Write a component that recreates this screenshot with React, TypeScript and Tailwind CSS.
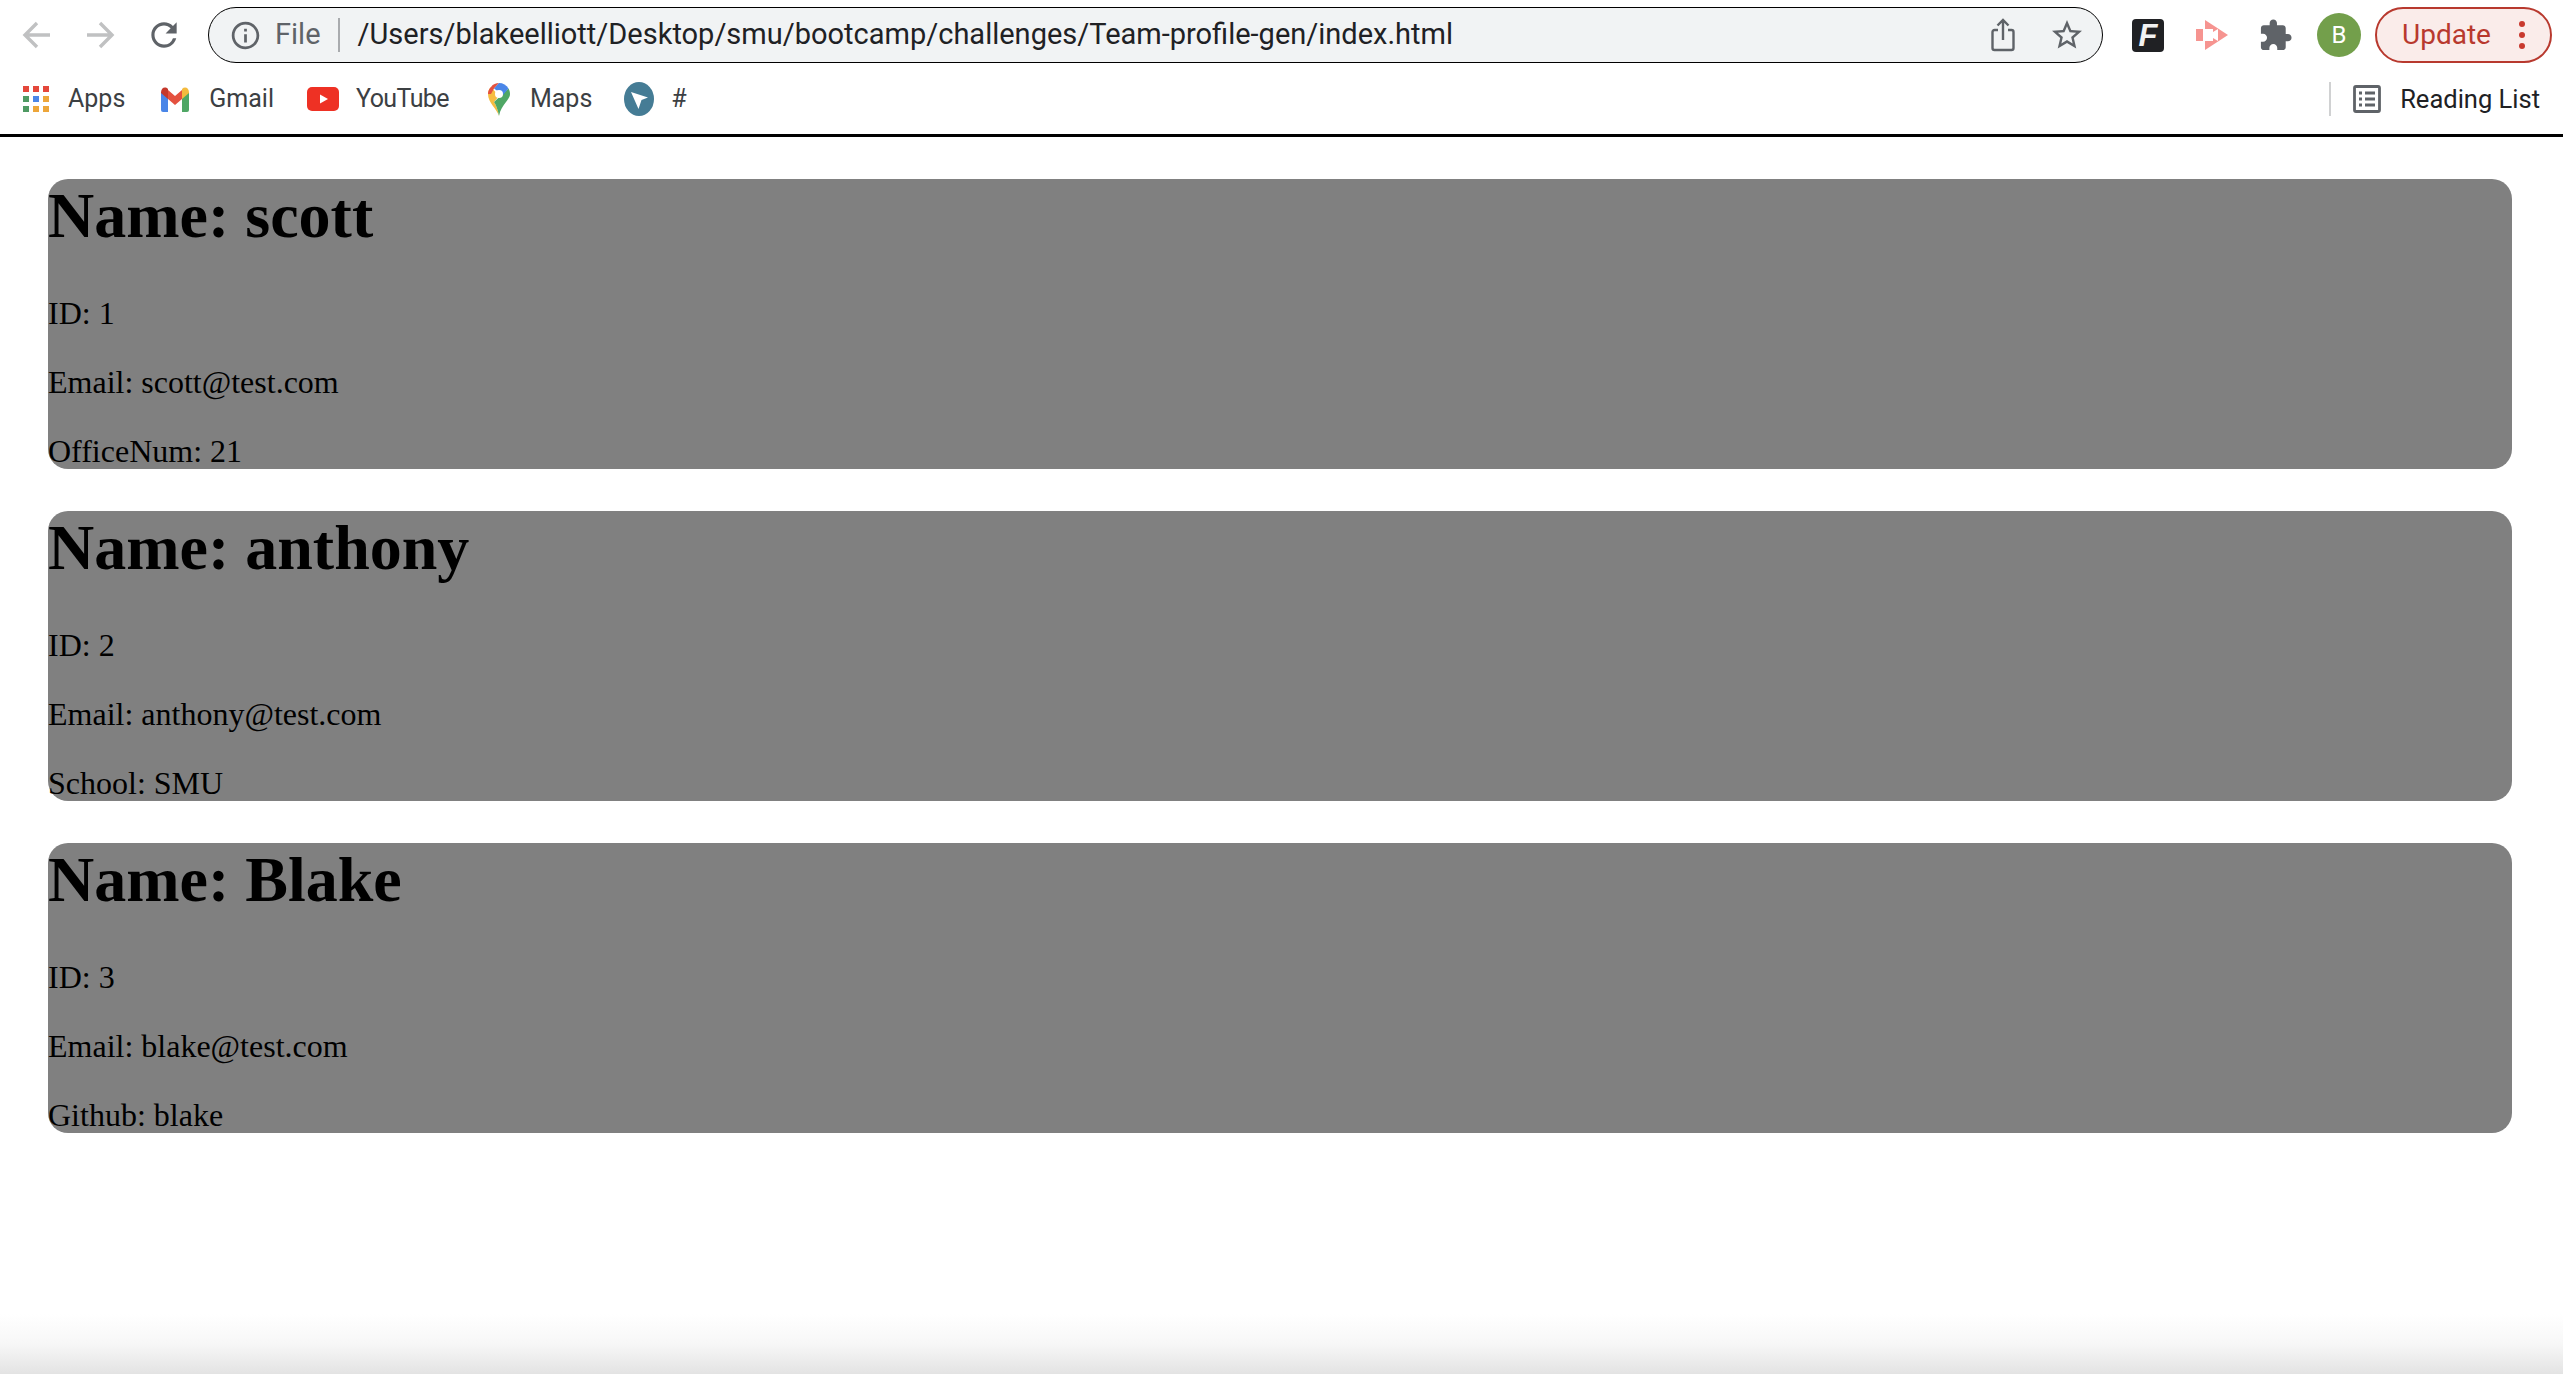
import React from 'react'

interface Member {
  name: string
  id: number
  email: string
  extra: string
}

const members: Member[] = [
  { name: 'scott', id: 1, email: 'scott@test.com', extra: 'OfficeNum: 21' },
  { name: 'anthony', id: 2, email: 'anthony@test.com', extra: 'School: SMU' },
  { name: 'Blake', id: 3, email: 'blake@test.com', extra: 'Github: blake' },
]

const appColors = ['#e4473b', '#e4473b', '#e4473b', '#4f9a63', '#4a86e8', '#eda63a', '#4f9a63', '#eda63a', '#eda63a']

const ArrowIcon = ({ flip = false }: { flip?: boolean }) => (
  <svg viewBox="0 0 30 30" className="w-[30px] h-[30px]" style={flip ? { transform: 'scaleX(-1)' } : undefined}>
    <path d="M28 15H3M15 3L3 15l12 12" fill="none" stroke="#c0c1c2" strokeWidth="3.4" />
  </svg>
)

const MaterialIcon = ({ d, className }: { d: string; className: string }) => (
  <svg viewBox="0 0 24 24" className={className} fill="currentColor">
    <path d={d} />
  </svg>
)

const AppsIcon = () => (
  <div className="grid grid-cols-3 gap-[4px] w-[26px]">
    {appColors.map((color, i) => (
      <span key={i} className="w-[6px] h-[6px]" style={{ backgroundColor: color }} />
    ))}
  </div>
)

const GmailIcon = () => (
  <svg viewBox="0 0 30 26" className="w-[30px] h-[26px]">
    <path d="M1 6v18a2 2 0 0 0 2 2h5V11z" fill="#4a86e8" />
    <path d="M29 6v18a2 2 0 0 1-2 2h-5V11z" fill="#4fa765" />
    <path d="M8 4v9l7 6 7-6V4l-7 6z" fill="#e4513f" />
    <path d="M1 6.500C1 2 5 0 8 3v10L1 7z" fill="#c5392c" />
    <path d="M29 6.500C29 2 25 0 22 3v10l7-6z" fill="#f4bb3e" />
  </svg>
)

const YouTubeIcon = () => (
  <svg viewBox="0 0 32 24" className="w-[32px] h-[24px]">
    <rect width="32" height="24" rx="5" fill="#ee3124" />
    <path d="M13 7.500l8 4.500-8 4.500z" fill="#fff" />
  </svg>
)

const MapsIcon = () => (
  <svg viewBox="0 0 24 34" className="w-[24px] h-[34px]">
    <path d="M12 34C10 27 1 21 1 12c0-3 1-5 3-7l8 9-5 6c2 3 4 8 5 14z" fill="#f6bd41" />
    <path d="M12 34c1-6 4-10 7-14 2-3 4-5 4-8 0-2-.6-4-1.500-5.500L7 20c2 3 4 8 5 14z" fill="#4fa765" />
    <path d="M4 5C6 2 9 1 12 1l-5 5.500L4 12l-3 0c0-3 1-5 3-7z" fill="#e4513f" />
    <path d="M12 1c4 0 7.500 2 9.500 5.500L16 13l-9-6.500z" fill="#4a86e8" />
    <circle cx="12" cy="12" r="4" fill="#fff" />
  </svg>
)

const CursorBadge = () => (
  <svg viewBox="0 0 30 34" className="w-[30px] h-[34px]">
    <ellipse cx="15" cy="17" rx="15" ry="17" fill="#457c95" />
    <path d="M7 10l17 5.500-6.500 2.500-3 9z" fill="#fff" />
  </svg>
)

const BookmarkItem = ({
  icon,
  label,
  className,
  labelClass = '',
}: {
  icon: React.ReactNode
  label: string
  className: string
  labelClass?: string
}) => (
  <div className={`flex items-center ${className}`}>
    {icon}
    <span className={`text-[25px] text-[#3c4043] ${labelClass}`}>{label}</span>
  </div>
)

const BrowserChrome = () => (
  <header className="shrink-0 h-[137px] border-b-[3px] border-black font-['Roboto',sans-serif]">
    {/* toolbar */}
    <div className="flex items-center h-[70px]">
      <div className="flex items-center justify-center w-[72px] pl-[1px]">
        <ArrowIcon />
      </div>
      <div className="flex items-center justify-center w-[56px]">
        <ArrowIcon flip />
      </div>
      <div className="flex items-center justify-center w-[72px] text-[#5f6368]">
        <MaterialIcon
          className="w-[38px] h-[38px]"
          d="M17.65 6.350A7.958 7.958 0 0 0 12 4c-4.420 0-7.990 3.580-7.990 8s3.570 8 7.990 8c3.730 0 6.840-2.550 7.730-6h-2.080A5.990 5.990 0 0 1 12 18c-3.310 0-6-2.690-6-6s2.690-6 6-6c1.660 0 3.140.690 4.220 1.780L13 11h7V4l-2.350 2.350z"
        />
      </div>
      <div className="flex items-center w-[1895px] h-[56px] ml-[8px] rounded-full border-[1.500px] border-black bg-[#f1f3f4]">
        <div className="flex items-center justify-center w-[66px] pl-[6px] text-[#5f6368]">
          <MaterialIcon
            className="w-[33px] h-[33px]"
            d="M11 7h2v2h-2zm0 4h2v6h-2zm1-9C6.480 2 2 6.480 2 12s4.480 10 10 10 10-4.480 10-10S17.520 2 12 2zm0 18c-4.410 0-8-3.590-8-8s3.590-8 8-8 8 3.590 8 8-3.590 8-8 8z"
          />
        </div>
        <span className="text-[29px] text-[#5f6368]">File</span>
        <span className="w-[2px] h-[34px] ml-[17px] bg-[#a9abae]" />
        <span className="ml-[18px] text-[29px] text-[#202124] whitespace-nowrap">
          /Users/blakeelliott/Desktop/smu/bootcamp/challenges/Team-profile-gen/index.html
        </span>
        <div className="flex items-center ml-auto text-[#5f6368]">
          <svg viewBox="0 0 24 34" className="w-[24px] h-[34px]" fill="none" stroke="currentColor" strokeWidth="2.400">
            <path d="M7 12H3.500a2 2 0 0 0-2 2v16a2 2 0 0 0 2 2h17a2 2 0 0 0 2-2V14a2 2 0 0 0-2-2H17M12 22V2M6.500 7.500L12 2l5.500 5.500" />
          </svg>
          <MaterialIcon
            className="w-[36px] h-[36px] ml-[34px] mr-[17px]"
            d="M22 9.240l-7.190-.620L12 2 9.190 8.630 2 9.240l5.460 4.730L5.820 21 12 17.270 18.180 21l-1.630-7.030L22 9.240zM12 15.400l-3.760 2.270 1-4.280-3.320-2.880 4.380-.380L12 6.100l1.710 4.040 4.380.380-3.320 2.880 1 4.280L12 15.400z"
          />
        </div>
      </div>
      {/* extensions */}
      <div className="flex items-center justify-center w-[32px] h-[33px] ml-[29px] rounded-[4px] bg-[#202124] overflow-hidden">
        <span className="text-[31px] leading-none font-bold italic text-[#f2f2f2] font-['Liberation_Sans',sans-serif]">F</span>
      </div>
      <svg viewBox="0 0 32 32" className="w-[32px] h-[32px] ml-[32px]" fill="#f69490">
        <path d="M0 10h7v12H0z" />
        <path d="M9 1l23 15-23 15z" />
        <path d="M9 10h8v3l5-3v12l-5-3v3H9z" fill="#fff" />
      </svg>
      <MaterialIcon
        className="w-[35px] h-[35px] ml-[30px] text-[#5f6368]"
        d="M20.500 11H19V7c0-1.100-.9-2-2-2h-4V3.500C13 2.120 11.880 1 10.500 1S8 2.120 8 3.500V5H4c-1.100 0-1.990.9-1.990 2v3.800H3.500c1.490 0 2.700 1.210 2.700 2.700s-1.210 2.700-2.700 2.700H2V20c0 1.100.9 2 2 2h3.800v-1.500c0-1.490 1.210-2.700 2.700-2.700 1.490 0 2.700 1.210 2.700 2.700V22H17c1.100 0 2-.9 2-2v-4h1.500c1.380 0 2.500-1.120 2.500-2.500S21.880 11 20.500 11z"
      />
      <div className="flex items-center justify-center w-[44px] h-[44px] ml-[24px] rounded-full bg-[#739f4b] text-[24px] text-white">
        B
      </div>
      <div className="flex items-center w-[177px] h-[56px] ml-[14px] pl-[25px] rounded-full border-[2px] border-[#b8392e] bg-[#faecea] text-[#b8392e]">
        <span className="text-[28px]">Update</span>
        <div className="flex flex-col gap-[5px] ml-[28px]">
          <span className="w-[6px] h-[6px] rounded-full bg-[#c8392e]" />
          <span className="w-[6px] h-[6px] rounded-full bg-[#c8392e]" />
          <span className="w-[6px] h-[6px] rounded-full bg-[#c8392e]" />
        </div>
      </div>
    </div>
    {/* bookmarks bar */}
    <div className="flex items-center h-[58px] pl-[23px]">
      <BookmarkItem icon={<AppsIcon />} label="Apps" className="gap-[19px]" />
      <BookmarkItem icon={<GmailIcon />} label="Gmail" className="gap-[19px] ml-[35px]" />
      <BookmarkItem icon={<YouTubeIcon />} label="YouTube" className="gap-[17px] ml-[33px]" labelClass="tracking-[-0.6px]" />
      <BookmarkItem icon={<MapsIcon />} label="Maps" className="gap-[19px] ml-[38px]" />
      <BookmarkItem icon={<CursorBadge />} label="#" className="gap-[17px] ml-[32px]" />
      <div className="flex items-center ml-auto pr-[23px]">
        <span className="w-[2px] h-[34px] bg-[#d0d1d2]" />
        <svg viewBox="0 0 28 28" className="w-[28px] h-[28px] ml-[22px]" fill="none" stroke="#5f6368" strokeWidth="2.800">
          <rect x="1.500" y="1.500" width="25" height="25" rx="1.500" />
          <path d="M6 8h3M12 8h10M6 14h3M12 14h10M6 20h3M12 20h10" />
        </svg>
        <span className="ml-[19px] text-[25.500px] text-[#202124]">Reading List</span>
      </div>
    </div>
  </header>
)

const MemberCard = ({ member }: { member: Member }) => (
  <section className="h-[290px] rounded-[20px] bg-[#808080] text-black">
    <h1 className="mb-[42.400px] text-[64px] leading-[74px] font-bold">Name: {member.name}</h1>
    <div className="flex flex-col gap-[31.600px] text-[32px] leading-[37px]">
      <p>ID: {member.id}</p>
      <p>Email: {member.email}</p>
      <p>{member.extra}</p>
    </div>
  </section>
)

export default function App() {
  return (
    <div className="flex flex-col h-[1374px] bg-white overflow-hidden">
      <BrowserChrome />
      <main className="flex-1 flex flex-col gap-[42px] pt-[42px] pl-[48px] pr-[51px] font-['Liberation_Serif',serif]">
        {members.map((member) => (
          <MemberCard key={member.id} member={member} />
        ))}
      </main>
      <div className="shrink-0 h-[60px] bg-linear-to-b from-white via-[#f7f7f7] to-[#e3e3e3]" />
    </div>
  )
}
